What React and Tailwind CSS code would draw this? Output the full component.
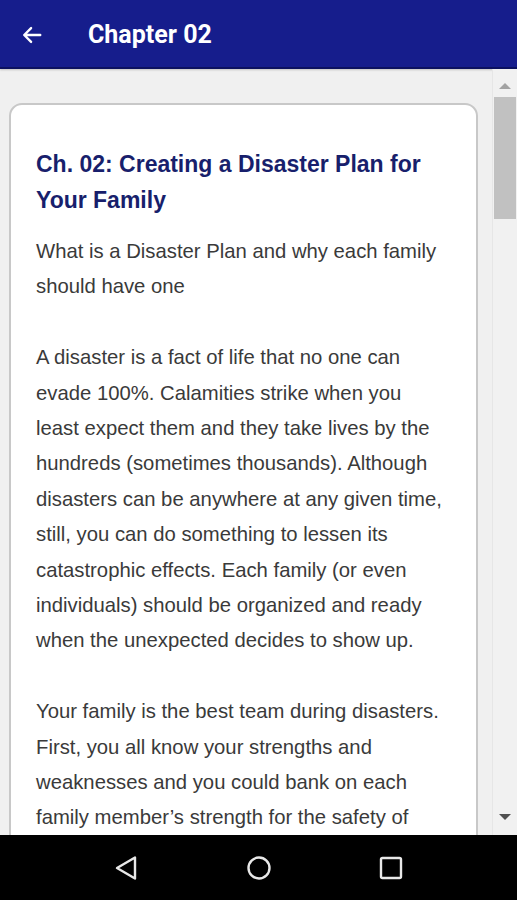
import React from "react";

const paragraphs = [
  "What is a Disaster Plan and why each family should have one",
  "A disaster is a fact of life that no one can evade 100%. Calamities strike when you least expect them and they take lives by the hundreds (sometimes thousands). Although disasters can be anywhere at any given time, still, you can do something to lessen its catastrophic effects. Each family (or even individuals) should be organized and ready when the unexpected decides to show up.",
  "Your family is the best team during disasters. First, you all know your strengths and weaknesses and you could bank on each family member’s strength for the safety of everyone. When you are in a disaster, you need to stay calm and know what to do.",
];

const App = () => {
  return (
    <div className="w-[517px] h-[900px] flex flex-col overflow-hidden bg-[#f0f0f0]">
      {/* app bar */}
      <div className="h-[69px] shrink-0 bg-[#161d8c] border-b-2 border-[#0c1160] flex items-center pt-[2px] shadow-[0_1px_2px_rgba(0,0,0,0.2)]">
        <svg width="22" height="22" viewBox="0 0 24 24" className="ml-[21px]" fill="none" stroke="white" strokeWidth="2.6" strokeLinecap="round" strokeLinejoin="round">
          <path d="M21 12H4M11 4.5L3.5 12L11 19.5" />
        </svg>
        <h1 className="ml-[45px] text-white text-[25px] font-bold font-['Roboto',sans-serif]">
          Chapter 02
        </h1>
      </div>

      {/* content */}
      <div className="flex-1 flex min-h-0">
        <div className="flex-1 min-w-0 pl-[9px] pr-[14px] pt-[34px] overflow-hidden">
          <div className="bg-white border-2 border-[#c8c8c8] rounded-[13px] pl-[25px] pr-[29px] pt-[41px] pb-8 font-['Liberation_Sans',Arial,sans-serif]">
            <h2 className="text-[#181f6c] text-[23px] font-bold leading-[36px]">
              Ch. 02: Creating a Disaster Plan for Your Family
            </h2>
            <div className="mt-[16px] text-[#3a3a3a] text-[20.3px] leading-[35.4px]">
              {paragraphs.map((p, i) => (
                <p key={i} className={i > 0 ? "mt-[35.4px]" : ""}>
                  {p}
                </p>
              ))}
            </div>
          </div>
        </div>

        {/* scrollbar */}
        <div className="w-[25px] shrink-0 bg-[#f1f1f1] flex flex-col items-center border-l border-[#e6e6e6]">
          <div className="h-[28px] flex items-center justify-center pt-[6px]">
            <div className="w-0 h-0 border-l-[6px] border-r-[6px] border-b-[6px] border-l-transparent border-r-transparent border-b-[#a3a3a3]" />
          </div>
          <div className="w-[22px] h-[122px] bg-[#c1c1c1]" />
          <div className="flex-1" />
          <div className="h-[30px] flex items-center justify-center pb-[6px]">
            <div className="w-0 h-0 border-l-[6px] border-r-[6px] border-t-[6px] border-l-transparent border-r-transparent border-t-[#505050]" />
          </div>
        </div>
      </div>

      {/* system nav bar */}
      <div className="h-[65px] shrink-0 bg-black flex items-center justify-center gap-[104px]">
        <svg width="28" height="28" viewBox="0 0 28 28" fill="none" stroke="#e8e8e8" strokeWidth="2.4" strokeLinejoin="round">
          <path d="M22 3.5V24.5L4 14Z" />
        </svg>
        <svg width="28" height="28" viewBox="0 0 28 28" fill="none" stroke="#e8e8e8" strokeWidth="2.4">
          <circle cx="14" cy="14" r="10.5" />
        </svg>
        <svg width="28" height="28" viewBox="0 0 28 28" fill="none" stroke="#e8e8e8" strokeWidth="2.4" strokeLinejoin="round">
          <rect x="4" y="4" width="20" height="20" rx="1.5" />
        </svg>
      </div>
    </div>
  );
};

export default App;
